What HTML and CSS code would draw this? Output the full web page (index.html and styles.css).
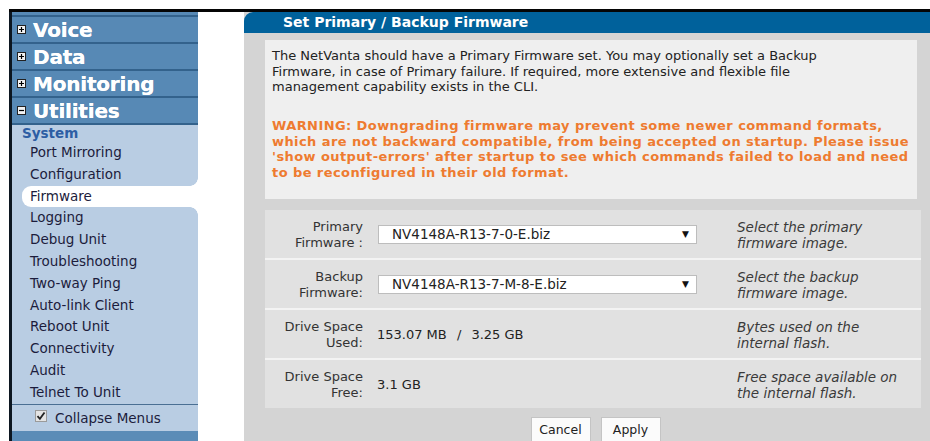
FILE: index.html
```html
<!DOCTYPE html>
<html lang="en">
<head>
<meta charset="utf-8">
<title>Set Primary / Backup Firmware</title>
<link rel="stylesheet" href="styles.css">
</head>
<body>
<div class="frame">
  <nav class="sidebar">
    <ul class="groups">
      <li class="group"><svg class="toggle" viewBox="0 0 9 9"><rect x="0.5" y="0.5" width="8" height="8" fill="#f2f2f2" stroke="#222"/><path d="M2 4.5h5M4.5 2v5" stroke="#000" stroke-width="1.2"/></svg>Voice</li>
      <li class="group"><svg class="toggle" viewBox="0 0 9 9"><rect x="0.5" y="0.5" width="8" height="8" fill="#f2f2f2" stroke="#222"/><path d="M2 4.5h5M4.5 2v5" stroke="#000" stroke-width="1.2"/></svg>Data</li>
      <li class="group"><svg class="toggle" viewBox="0 0 9 9"><rect x="0.5" y="0.5" width="8" height="8" fill="#f2f2f2" stroke="#222"/><path d="M2 4.5h5M4.5 2v5" stroke="#000" stroke-width="1.2"/></svg>Monitoring</li>
      <li class="group"><svg class="toggle" viewBox="0 0 9 9"><rect x="0.5" y="0.5" width="8" height="8" fill="#f2f2f2" stroke="#222"/><path d="M2 4.5h5" stroke="#000" stroke-width="1.2"/></svg>Utilities</li>
    </ul>
    <div class="submenu">
      <div class="subhead">System</div>
      <ul class="items">
        <li>Port Mirroring</li>
        <li>Configuration</li>
        <li class="current">Firmware</li>
        <li>Logging</li>
        <li>Debug Unit</li>
        <li>Troubleshooting</li>
        <li>Two-way Ping</li>
        <li>Auto-link Client</li>
        <li>Reboot Unit</li>
        <li>Connectivity</li>
        <li>Audit</li>
        <li>Telnet To Unit</li>
      </ul>
      <div class="collapse">
        <svg class="check" viewBox="0 0 12 12"><rect x="0.5" y="0.5" width="11" height="11" fill="#e4e4e4" stroke="#9a9a9a"/><path d="M2.5 6.2l2.4 2.6 4.6-6.3" fill="none" stroke="#222" stroke-width="1.8"/></svg>
        <span>Collapse Menus</span>
      </div>
    </div>
    <div class="foot"></div>
  </nav>

  <main class="panel">
    <h1 class="panel-title">Set Primary / Backup Firmware</h1>
    <div class="panel-body">
      <section class="intro">
        <p class="lead">The NetVanta should have a Primary Firmware set. You may optionally set a Backup Firmware, in case of Primary failure. If required, more extensive and flexible file management capability exists in the CLI.</p>
        <p class="warning">WARNING: Downgrading firmware may prevent some newer command formats, which are not backward compatible, from being accepted on startup. Please issue 'show output-errors' after startup to see which commands failed to load and need to be reconfigured in their old format.</p>
      </section>

      <table class="settings">
        <tr>
          <th>Primary<br>Firmware :</th>
          <td class="value"><div class="select"><span>NV4148A-R13-7-0-E.biz</span><span class="arrow">&#9660;</span></div></td>
          <td class="hint">Select the primary<br>firmware image.</td>
        </tr>
        <tr>
          <th>Backup<br>Firmware:</th>
          <td class="value"><div class="select"><span>NV4148A-R13-7-M-8-E.biz</span><span class="arrow">&#9660;</span></div></td>
          <td class="hint">Select the backup<br>firmware image.</td>
        </tr>
        <tr>
          <th>Drive Space<br>Used:</th>
          <td class="value">153.07 MB <span class="sep">/</span> 3.25 GB</td>
          <td class="hint">Bytes used on the<br>internal flash.</td>
        </tr>
        <tr>
          <th>Drive Space<br>Free:</th>
          <td class="value">3.1 GB</td>
          <td class="hint">Free space available on<br>the internal flash.</td>
        </tr>
      </table>

      <div class="actions">
        <button type="button">Cancel</button>
        <button type="button">Apply</button>
      </div>
    </div>
  </main>
</div>
</body>
</html>
```

FILE: styles.css
```css
html, body {
  margin: 0;
  background: #fff;
  font-family: "DejaVu Sans", Verdana, sans-serif;
  font-size: 13px;
  overflow: hidden;
}

.frame {
  display: flex;
  margin: 9px 0 0 9px;
  border-top: 3px solid #050505;
  height: 429px;
}

/* ---------- left navigation ---------- */
.sidebar {
  width: 186px;
  border-left: 3px solid #0c1620;
  display: flex;
  flex-direction: column;
  background: #5a8ab5;
}

.groups {
  list-style: none;
  margin: 0;
  padding: 3px 0 0;
  background: #5789b5;
}

.group {
  display: flex;
  align-items: center;
  height: 25px;
  padding-left: 5px;
  border-top: 2px solid #33628c;
  color: #fff;
  font-weight: bold;
  font-size: 20px;
  letter-spacing: -0.2px;
  text-shadow: 0 0 0.6px #fff;
}

.toggle {
  width: 9px;
  height: 9px;
  margin-right: 7px;
  flex: none;
}

.submenu {
  background: #b9cde3;
  border-top: 2px solid #33628c;
}

.subhead {
  padding-left: 10px;
  line-height: 17px;
  font-weight: bold;
  font-size: 13.5px;
  color: #2d5ea4;
}

.items {
  list-style: none;
  margin: 0;
  padding: 0;
}

.items li {
  padding-left: 18px;
  line-height: 21.8px;
  font-size: 13.5px;
  color: #1c1c3c;
}

.items li.current {
  position: relative;
  margin-left: 10px;
  padding-left: 8px;
  background: #fff;
  border-radius: 9px 0 0 9px;
}

/* inverted corners where the selected tab meets the menu column */
.items li.current::before,
.items li.current::after {
  content: "";
  position: absolute;
  right: 0;
  width: 8px;
  height: 8px;
}

.items li.current::before {
  top: -8px;
  background: radial-gradient(circle at 0 0, transparent 7.5px, #fff 8px);
}

.items li.current::after {
  bottom: -8px;
  background: radial-gradient(circle at 0 100%, transparent 7.5px, #fff 8px);
}

.collapse {
  display: flex;
  align-items: center;
  height: 26px;
  border-top: 1px solid #4a6f93;
  padding-left: 23px;
  color: #1c1c3c;
  font-size: 13.5px;
}

.check {
  width: 12px;
  height: 12px;
  margin: -4px 8px 0 0;
}

.foot {
  flex: 1;
  background: #5b8cb7;
}

/* ---------- main panel ---------- */
.panel {
  flex: 1;
  margin-left: 46px;
  background: #d4d4d4;
  display: flex;
  flex-direction: column;
}

.panel-title {
  margin: 0;
  height: 21px;
  line-height: 21px;
  padding-left: 39px;
  background: #00619b;
  border-top-left-radius: 9px;
  color: #fff;
  font-size: 14px;
  font-weight: bold;
}

.panel-body {
  padding: 7px 9px 0 21px;
}

.intro {
  margin-right: 4px;
  padding: 8px 5px 19px 7px;
  background: #efefef;
  color: #222;
}

.intro p {
  margin: 0;
  line-height: 15.5px;
}

.intro .lead {
  max-width: 600px;
}

.intro .warning {
  margin-top: 23.5px;
  color: #ee7b30;
  font-weight: bold;
  letter-spacing: 0.42px;
}

.settings {
  width: 100%;
  margin-top: 11px;
  border-collapse: collapse;
  background: #e1e1e1;
}

.settings tr {
  border-bottom: 2px solid #f3f3f3;
}

.settings tr:last-child {
  border-bottom: 0;
}

.settings th,
.settings td {
  height: 46px;
  padding: 2px 0 0;
  vertical-align: middle;
  line-height: 16.5px;
}

.settings th {
  width: 98px;
  padding-right: 5px;
  text-align: right;
  font-weight: normal;
  color: #333;
}

.settings .value {
  width: 352px;
  padding-left: 9px;
  color: #222;
}

.sep {
  margin: 0 6px;
}

.select {
  display: flex;
  justify-content: space-between;
  align-items: center;
  box-sizing: border-box;
  width: 319px;
  height: 19px;
  margin: -2px 0 0 1px;
  padding: 0 7px 0 13px;
  background: #fff;
  border: 1px solid #bdbdbd;
  font-size: 13.5px;
}

.arrow {
  font-size: 9px;
  color: #111;
}

.settings .hint {
  padding-left: 8px;
  font-style: italic;
  font-size: 13.5px;
  color: #3a3a3a;
}

.actions {
  display: flex;
  justify-content: center;
  gap: 10px;
  margin-top: 9px;
  padding-left: 5px;
}

.actions button {
  width: 60px;
  height: 25px;
  padding: 0;
  background: #fbfbfb;
  border: 1px solid #c4c4c4;
  border-radius: 0;
  font-family: inherit;
  font-size: 12.5px;
  color: #222;
}
```
